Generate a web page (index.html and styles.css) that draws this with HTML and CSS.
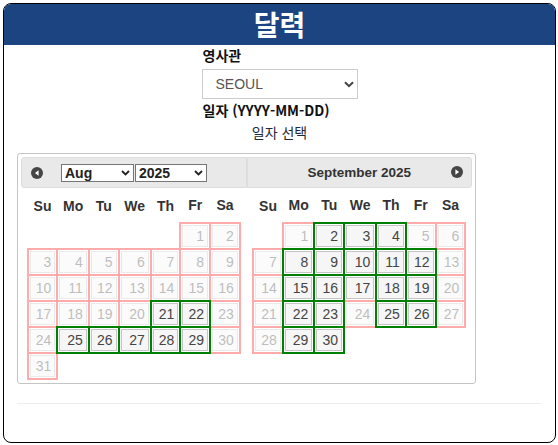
FILE: index.html
```html
<!DOCTYPE html>
<html lang="ko">
<head>
<meta charset="utf-8">
<title>달력</title>
<link rel="stylesheet" href="styles.css">
</head>
<body>
<div class="card">
  <div class="card-head"><h1 class="title">달력</h1></div>
  <div class="form">
    <div class="field">
      <label class="lbl">영사관</label>
      <span class="sel-wrap">
        <select class="sel"><option>SEOUL</option></select>
        <svg class="sel-chev" width="10" height="7" viewBox="0 0 10 7"><path d="M1 1.2 L5 5.2 L9 1.2" fill="none" stroke="#444" stroke-width="2"/></svg>
      </span>
      <label class="lbl lbl-date">일자 (YYYY-MM-DD)</label>
    </div>
    <div class="pick-label">일자 선택</div>
  </div>
  <div class="content">
    <div class="dp">
      <div class="dp-group">
        <div class="dp-head dp-head-left">
          <svg class="dp-prev" width="12" height="12" viewBox="0 0 12 12"><circle cx="6" cy="6" r="6" fill="#454545"/><path d="M7.6 3.2 L3.9 6 L7.6 8.8Z" fill="#fff"/></svg>
          <span class="mini-wrap mini-month">
            <select class="mini-sel"><option>Aug</option></select>
            <svg class="mini-chev" width="9" height="6" viewBox="0 0 9 6"><path d="M1 1 L4.5 4.5 L8 1" fill="none" stroke="#222" stroke-width="1.8"/></svg>
          </span>
          <span class="mini-wrap mini-year">
            <select class="mini-sel"><option>2025</option></select>
            <svg class="mini-chev" width="9" height="6" viewBox="0 0 9 6"><path d="M1 1 L4.5 4.5 L8 1" fill="none" stroke="#222" stroke-width="1.8"/></svg>
          </span>
        </div>
        <table class="cal">
          <thead><tr><th>Su</th><th>Mo</th><th>Tu</th><th>We</th><th>Th</th><th>Fr</th><th>Sa</th></tr></thead>
          <tbody>
            <tr><td class="empty">&nbsp;</td><td class="empty">&nbsp;</td><td class="empty">&nbsp;</td><td class="empty">&nbsp;</td><td class="empty">&nbsp;</td><td class="off"><span class="d">1</span></td><td class="off"><span class="d">2</span></td></tr>
            <tr><td class="off"><span class="d">3</span></td><td class="off"><span class="d">4</span></td><td class="off"><span class="d">5</span></td><td class="off"><span class="d">6</span></td><td class="off"><span class="d">7</span></td><td class="off"><span class="d">8</span></td><td class="off"><span class="d">9</span></td></tr>
            <tr><td class="off"><span class="d">10</span></td><td class="off"><span class="d">11</span></td><td class="off"><span class="d">12</span></td><td class="off"><span class="d">13</span></td><td class="off"><span class="d">14</span></td><td class="off"><span class="d">15</span></td><td class="off"><span class="d">16</span></td></tr>
            <tr><td class="off"><span class="d">17</span></td><td class="off"><span class="d">18</span></td><td class="off"><span class="d">19</span></td><td class="off"><span class="d">20</span></td><td class="on"><span class="d">21</span></td><td class="on"><span class="d">22</span></td><td class="off"><span class="d">23</span></td></tr>
            <tr><td class="off"><span class="d">24</span></td><td class="on"><span class="d">25</span></td><td class="on"><span class="d">26</span></td><td class="on"><span class="d">27</span></td><td class="on"><span class="d">28</span></td><td class="on"><span class="d">29</span></td><td class="off"><span class="d">30</span></td></tr>
            <tr><td class="off"><span class="d">31</span></td><td class="empty">&nbsp;</td><td class="empty">&nbsp;</td><td class="empty">&nbsp;</td><td class="empty">&nbsp;</td><td class="empty">&nbsp;</td><td class="empty">&nbsp;</td></tr>
          </tbody>
        </table>
      </div>
      <div class="dp-group">
        <div class="dp-head dp-head-right">
          <span class="dp-title">September 2025</span>
          <svg class="dp-next" width="12" height="12" viewBox="0 0 12 12"><circle cx="6" cy="6" r="6" fill="#454545"/><path d="M4.4 3.2 L8.1 6 L4.4 8.8Z" fill="#fff"/></svg>
        </div>
        <table class="cal">
          <thead><tr><th>Su</th><th>Mo</th><th>Tu</th><th>We</th><th>Th</th><th>Fr</th><th>Sa</th></tr></thead>
          <tbody>
            <tr><td class="empty">&nbsp;</td><td class="off"><span class="d">1</span></td><td class="on"><span class="d">2</span></td><td class="on"><span class="d">3</span></td><td class="on"><span class="d">4</span></td><td class="off"><span class="d">5</span></td><td class="off"><span class="d">6</span></td></tr>
            <tr><td class="off"><span class="d">7</span></td><td class="on"><span class="d">8</span></td><td class="on"><span class="d">9</span></td><td class="on"><span class="d">10</span></td><td class="on"><span class="d">11</span></td><td class="on"><span class="d">12</span></td><td class="off"><span class="d">13</span></td></tr>
            <tr><td class="off"><span class="d">14</span></td><td class="on"><span class="d">15</span></td><td class="on"><span class="d">16</span></td><td class="plain"><span class="d">17</span></td><td class="on"><span class="d">18</span></td><td class="on"><span class="d">19</span></td><td class="off"><span class="d">20</span></td></tr>
            <tr><td class="off"><span class="d">21</span></td><td class="on"><span class="d">22</span></td><td class="on"><span class="d">23</span></td><td class="off"><span class="d">24</span></td><td class="on"><span class="d">25</span></td><td class="on"><span class="d">26</span></td><td class="off"><span class="d">27</span></td></tr>
            <tr><td class="off"><span class="d">28</span></td><td class="on"><span class="d">29</span></td><td class="on"><span class="d">30</span></td><td class="empty">&nbsp;</td><td class="empty">&nbsp;</td><td class="empty">&nbsp;</td><td class="empty">&nbsp;</td></tr>
          </tbody>
        </table>
      </div>
    </div>
    <hr class="rule">
  </div>
</div>
</body>
</html>
```

FILE: styles.css
```css
* { box-sizing: border-box; }
html, body { margin: 0; padding: 0; background: #fff; }
body { font-family: "Noto Sans CJK KR", "Noto Sans", sans-serif; color: #222; }

.card {
  margin: 3px;
  width: 553px;
  height: 440px;
  border: 1px solid #000;
  border-radius: 8px;
  overflow: hidden;
  background: #fff;
}
.card-head {
  height: 41px;
  background: #1b4480;
  display: flex;
  justify-content: center;
  align-items: center;
}
.title {
  margin: 0;
  color: #fff;
  font-size: 28px;
  font-weight: 700;
  line-height: 41px;
}

.form { display: flex; flex-direction: column; align-items: center; }
.field { width: 156px; display: flex; flex-direction: column; }
.lbl {
  font-size: 14px;
  font-weight: 700;
  line-height: 20px;
  color: #111;
  white-space: nowrap;
  margin-left: 1px;
}
.lbl-date { margin-top: 1px; }
.sel-wrap { position: relative; display: block; margin-top: 4px; height: 30px; }
.sel {
  appearance: none;
  -webkit-appearance: none;
  width: 156px;
  height: 30px;
  border: 1px solid #ccc;
  border-radius: 0;
  background: #fff;
  padding: 0 0 0 13px;
  font-family: "Liberation Sans", Arial, sans-serif;
  font-size: 14px;
  color: #555;
}
.sel-chev { position: absolute; right: 4px; top: 12px; }
.pick-label {
  margin-top: 2px;
  font-size: 14px;
  line-height: 20px;
  color: #1f2a3a;
  text-align: center;
}

.content { padding: 11px 14px 0 13px; }

.dp {
  width: 459px;
  border: 1px solid #c5c5c5;
  border-radius: 3px;
  padding: 3px 3px 0;
  display: flex;
  font-family: "Liberation Sans", Arial, sans-serif;
  font-size: 14px;
  color: #333;
  background: #fff;
}
.dp-group { width: 50%; }
.dp-head {
  height: 31px;
  background: #e9e9e9;
  border: 1px solid #ddd;
  display: flex;
  align-items: center;
}
.dp-head-left { border-radius: 3px 0 0 3px; }
.dp-head-right { border-radius: 0 3px 3px 0; justify-content: center; position: relative; }
.dp-prev { margin-left: 9px; flex: none; }
.mini-wrap { position: relative; display: block; height: 18px; flex: none; }
.mini-month { margin-left: 18px; width: 73px; }
.mini-year { width: 72px; margin-left: 1px; }
.mini-sel {
  appearance: none;
  -webkit-appearance: none;
  width: 100%;
  height: 18px;
  border: 1px solid #767676;
  border-radius: 0;
  background: #fff;
  padding: 0 0 0 3px;
  font-family: "Liberation Sans", Arial, sans-serif;
  font-size: 14px;
  font-weight: 700;
  line-height: 16px;
  color: #222;
}
.mini-chev { position: absolute; right: 4px; top: 6px; }
.dp-title { font-weight: 700; line-height: 20px; font-size: 13.5px; }
.dp-next { position: absolute; right: 8px; top: 8px; }

.cal {
  width: 95%;
  margin: 0 auto 3px;
  border-collapse: collapse;
  font-size: 14px;
}
.cal th {
  padding: 9px 4px;
  line-height: 16px;
  font-weight: 700;
  text-align: center;
  color: #333;
}
.cal td {
  padding: 1px;
  border: 0;
}
.cal td.empty { line-height: 16px; }
.cal td.on { border: 2px double #008000; }
.cal td.off { border: 2px solid #ffabab; }
.cal .d {
  display: block;
  padding: 2px 3px 2px 2px;
  line-height: 16px;
  text-align: right;
  border: 1px solid #c5c5c5;
  background: #f6f6f6;
  color: #454545;
}
.cal td.off .d { opacity: 0.35; }

.rule {
  margin: 19px 0 0;
  border: 0;
  border-top: 1px solid #eee;
  height: 0;
}
```
